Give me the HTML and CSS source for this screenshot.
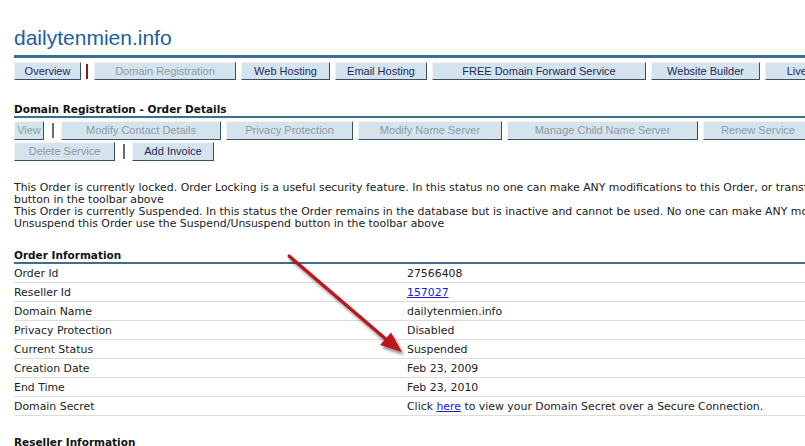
FILE: index.html
```html
<!DOCTYPE html>
<html lang="en">
<head>
  <meta charset="UTF-8" />
  <title>Order Details - dailytenmien.info</title>
  <link rel="stylesheet" href="styles.css">
</head>
<body>

  <div class="page">
    <h1 class="site-title">dailytenmien.info</h1>

    <div class="nav">
      <span class="btn w-overview">Overview</span>
      <span class="sep red"></span>
      <span class="btn off w-domreg">Domain Registration</span>
      <span class="btn w-web">Web Hosting</span>
      <span class="btn w-email">Email Hosting</span>
      <span class="btn w-forward">FREE Domain Forward Service</span>
      <span class="btn w-builder">Website Builder</span>
      <span class="btn w-live">Live Chat</span>
    </div>

    <h2 class="section">Domain Registration - Order Details</h2>

    <div class="toolbar">
      <div class="tool-row">
        <span class="btn off w-view">View</span>
        <span class="sep"></span>
        <span class="btn off w-contact">Modify Contact Details</span>
        <span class="btn off w-privacy">Privacy Protection</span>
        <span class="btn off w-ns">Modify Name Server</span>
        <span class="btn off w-child">Manage Child Name Server</span>
        <span class="btn off w-renew">Renew Service</span>
      </div>
      <div class="tool-row">
        <span class="btn off w-delete">Delete Service</span>
        <span class="sep"></span>
        <span class="btn w-invoice">Add Invoice</span>
      </div>
    </div>

    <div class="notice">
      <div>This Order is currently locked. Order Locking is a useful security feature. In this status no one can make ANY modifications to this Order, or transfer it. To Unlock this Order use the Lock/Unlock</div>
      <div>button in the toolbar above</div>
      <div>This Order is currently Suspended. In this status the Order remains in the database but is inactive and cannot be used. No one can make ANY modifications to this Order. To</div>
      <div>Unsuspend this Order use the Suspend/Unsuspend button in the toolbar above</div>
    </div>

    <h2 class="section info">Order Information</h2>
    <table class="details">
      <tr><td class="label">Order Id</td><td>27566408</td></tr>
      <tr><td class="label">Reseller Id</td><td><a href="#">157027</a></td></tr>
      <tr><td class="label">Domain Name</td><td>dailytenmien.info</td></tr>
      <tr><td class="label">Privacy Protection</td><td>Disabled</td></tr>
      <tr><td class="label">Current Status</td><td>Suspended</td></tr>
      <tr><td class="label">Creation Date</td><td>Feb 23, 2009</td></tr>
      <tr><td class="label">End Time</td><td>Feb 23, 2010</td></tr>
      <tr><td class="label">Domain Secret</td><td>Click <a href="#">here</a> to view your Domain Secret over a Secure Connection.</td></tr>
    </table>

    <h2 class="section plain">Reseller Information</h2>
  </div>

  <!-- callout arrow pasted over the screenshot -->
  <svg class="arrow" width="805" height="446" viewBox="0 0 805 446">
    <defs>
      <filter id="shadow" x="-20%" y="-20%" width="140%" height="140%">
        <feDropShadow dx="2" dy="3" stdDeviation="1.6" flood-color="#000" flood-opacity="0.45"/>
      </filter>
    </defs>
    <g filter="url(#shadow)">
      <line x1="289" y1="256" x2="388" y2="341" stroke="#bb131c" stroke-width="3.2" stroke-linecap="round"/>
      <polygon points="402,352 380,345 391,332.5" fill="#bb131c"/>
    </g>
  </svg>

</body>
</html>
```

FILE: styles.css
```css
html {
  overflow: hidden;
}

body {
  margin: 0;
  background: #fff;
  font-family: "DejaVu Sans", Verdana, sans-serif;
  font-size: 10.9px;
  color: #222;
}

.page {
  width: 1100px;
  padding-left: 14px;
}

.site-title {
  margin: 26px 0 0;
  font-family: "Liberation Sans", Arial, sans-serif;
  font-weight: normal;
  font-size: 21px;
  line-height: 24px;
  color: #22609e;
  border-bottom: 3px solid #3b6f91;
  padding-bottom: 5px;
}

/* buttons */
.nav,
.tool-row {
  display: flex;
  align-items: center;
  gap: 5px;
}

.nav {
  margin-top: 4px;
}

.btn {
  display: inline-block;
  box-sizing: border-box;
  height: 18px;
  line-height: 16px;
  text-align: center;
  font-family: "Liberation Sans", Tahoma, sans-serif;
  font-size: 11px;
  color: #1b2b5c;
  background: #d5e3ed;
  border: 1px solid;
  border-color: #eef4f8 #34506e #34506e #eef4f8;
  white-space: nowrap;
}

.btn.off {
  color: #8c9ba6;
}

.tool-row .btn {
  height: 19px;
  line-height: 17px;
}

.sep {
  width: 2px;
  height: 15px;
  margin: 0 2px 0 3px;
  background: #6b6b6b;
}

.sep.red {
  background: #8b1c25;
  margin: 0 1px 0 0;
}

.w-overview { width: 67px; }
.w-domreg { width: 142px; }
.w-web { width: 89px; }
.w-email { width: 92px; }
.w-forward { width: 214px; }
.w-builder { width: 109px; }
.w-live { width: 90px; }

.w-view { width: 30px; }
.w-contact { width: 160px; }
.w-privacy { width: 127px; }
.w-ns { width: 144px; }
.w-child { width: 191px; }
.w-renew { width: 110px; }
.w-delete { width: 101px; }
.w-invoice { width: 82px; }

/* section headings */
.section {
  margin: 22px 0 0;
  font-size: 10.5px;
  font-weight: bold;
  line-height: 14px;
  color: #111;
  border-bottom: 2px solid #3b6f91;
}

.section.info {
  margin-top: 18px;
}

.section.plain {
  margin-top: 19px;
  border-bottom: none;
}

.toolbar {
  margin-top: 3px;
  display: flex;
  flex-direction: column;
  gap: 2px;
}

.notice {
  margin-top: 21px;
  line-height: 12px;
  white-space: nowrap;
}

/* order info table */
.details {
  width: 100%;
  border-collapse: collapse;
}

.details td {
  height: 18px;
  padding: 0;
  border-bottom: 1px solid #dcdcdc;
  vertical-align: middle;
}

.details td.label {
  width: 393px;
}

.details a {
  color: #1a1adb;
}

.arrow {
  position: absolute;
  left: 0;
  top: 0;
  pointer-events: none;
}
```
